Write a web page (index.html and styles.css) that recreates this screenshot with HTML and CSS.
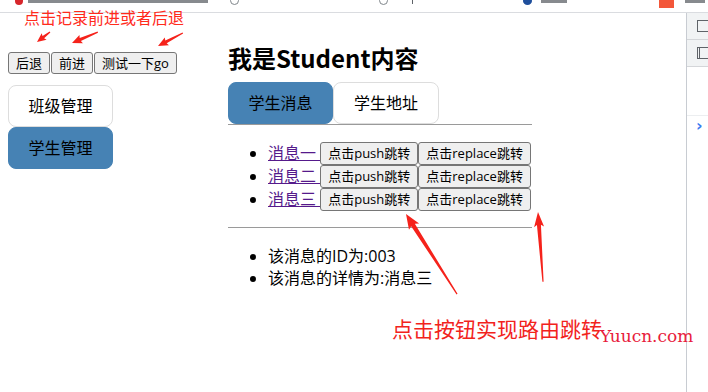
FILE: index.html
```html
<!DOCTYPE html>
<html lang="zh-CN">
<head>
<meta charset="utf-8">
<title>Student</title>
<link rel="stylesheet" href="styles.css">
</head>
<body>
<div class="chrome">
  <span class="c-red"></span>
  <span class="c-text c-t1"></span>
  <span class="c-ring c-r1"></span>
  <span class="c-ring c-r2"></span>
  <span class="c-bar"></span>
  <span class="c-blue"></span>
  <span class="c-text c-t2"></span>
  <span class="c-orange"></span>
  <span class="c-text c-t3"></span>
</div>
<div class="frame">
  <main class="page">
    <div class="row">
      <div class="side">
        <div class="hist"><button class="btn">后退</button><button class="btn">前进</button><button class="btn">测试一下go</button></div>
        <nav class="menu">
          <a class="menu-item">班级管理</a>
          <a class="menu-item active">学生管理</a>
        </nav>
      </div>
      <section class="content">
        <h2 class="title">我是Student内容</h2>
        <div class="tabs">
          <a class="tab active">学生消息</a>
          <a class="tab">学生地址</a>
        </div>
        <ul class="msgs">
          <li><a class="msg-link" href="#">消息一&nbsp;</a><button class="btn btn-row">点击push跳转</button><button class="btn btn-row">点击replace跳转</button></li>
          <li><a class="msg-link" href="#">消息二&nbsp;</a><button class="btn btn-row">点击push跳转</button><button class="btn btn-row">点击replace跳转</button></li>
          <li><a class="msg-link" href="#">消息三&nbsp;</a><button class="btn btn-row">点击push跳转</button><button class="btn btn-row">点击replace跳转</button></li>
        </ul>
        <hr class="rule">
        <ul class="detail">
          <li>该消息的ID为:003</li>
          <li>该消息的详情为:消息三</li>
        </ul>
      </section>
    </div>
  </main>
  <aside class="devtools">
    <div class="dt-row"><span class="dt-ico dt-ico1"></span></div>
    <div class="dt-row"><span class="dt-ico dt-ico2"></span></div>
    <div class="dt-empty"></div>
    <div class="dt-prompt">›</div>
  </aside>
</div>

<div class="notes">
  <div class="note note-top">点击记录前进或者后退</div>
  <div class="note note-big">点击按钮实现路由跳转</div>
  <div class="note wm">Yuucn.com</div>
  <svg class="arrows" width="708" height="392" viewBox="0 0 708 392">
    <g fill="#f5221b">
      <polygon transform="translate(37 42) rotate(-37.6)" points="0,0 9,-4 8,-1.3 16.4,-0.6 16.4,0.6 8,1.3 9,4"/>
      <polygon transform="translate(72 43) rotate(-22.9)" points="0,0 10,-4.5 9,-1.5 28,-0.6 28,0.6 9,1.5 10,4.5"/>
      <polygon transform="translate(158 46) rotate(-27.5)" points="0,0 10,-4.5 9,-1.5 28,-0.6 28,0.6 9,1.5 10,4.5"/>
      <polygon transform="translate(406 214) rotate(57.5)" points="0,0 15,-6 13,-2.2 95,-0.6 95,0.6 13,2.2 15,6"/>
      <polygon transform="translate(538 212) rotate(85.9)" points="0,0 15,-5 13,-2 70,-0.6 70,0.6 13,2 15,5"/>
    </g>
  </svg>
</div>
</body>
</html>
```

FILE: styles.css
```css
* { box-sizing: border-box; }
html, body { margin: 0; padding: 0; }
body {
  width: 708px;
  height: 392px;
  overflow: hidden;
  background: #fff;
  color: #000;
  font-family: "Open Sans", "Noto Sans CJK SC", sans-serif;
  position: relative;
}

/* browser chrome remnant */
.chrome {
  height: 13px;
  border-bottom: 1px solid #dadce0;
  position: relative;
  display: flex;
  align-items: flex-start;
  overflow: hidden;
}
.chrome span { display: block; flex: none; }
.c-red { width: 8px; height: 8px; margin-top: -3px; margin-left: 15px; border-radius: 50%; background: #d7262b; }
.c-text { height: 3px; background: #5f6368; opacity: .75; }
.c-t1 { width: 180px; margin-left: 5px; }
.c-ring { width: 9px; height: 9px; margin-top: -4px; border: 1.5px solid #80868b; border-radius: 50%; }
.c-r1 { margin-left: 22px; }
.c-r2 { margin-left: 140px; }
.c-bar { width: 1px; height: 4px; background: #5f6368; margin-left: 24px; }
.c-blue { width: 9px; height: 8px; margin-top: -3px; margin-left: 110px; border-radius: 50%; background: #1f4f9c; }
.c-t2 { width: 26px; margin-left: 9px; }
.c-orange { width: 15px; height: 8px; margin-left: 92px; background: #f3573a; }
.c-t3 { width: 20px; margin-left: 11px; }

.frame { display: flex; height: 379px; }
.page { flex: 1; padding: 29px 0 0 8px; }
.row { display: flex; align-items: flex-start; }

/* left column */
.side { width: 220px; flex: none; padding-top: 10px; }
.hist { display: flex; gap: 1px; }
.btn {
  font-family: "Open Sans", "Noto Sans CJK SC", sans-serif;
  font-size: 13px;
  line-height: 20px;
  height: 22px;
  padding: 0 7px;
  margin: 0;
  background: #efefef;
  color: #000;
  border: 1px solid #767676;
  border-radius: 3px;
}
.menu { margin-top: 11px; width: 105px; display: flex; flex-direction: column; }
.menu-item {
  display: block;
  height: 42px;
  line-height: 40px;
  text-align: center;
  font-size: 16px;
  color: #000;
  background: #fff;
  border: 1px solid #ddd;
  border-radius: 8px;
}
.menu-item.active { background: #4682b4; border-color: #4682b4; }

/* right column */
.content { width: 304px; flex: none; }
.title { margin: 0; font-family: "Noto Sans CJK SC", sans-serif; font-size: 24px; line-height: 32px; font-weight: 700; }
.tabs { margin-top: 8px; display: flex; border-bottom: 1px solid #9a9a9a; }
.tab {
  display: block;
  width: 106px;
  height: 42px;
  line-height: 40px;
  text-align: center;
  font-size: 16px;
  color: #000;
  background: #fff;
  border: 1px solid #ddd;
  border-radius: 8px;
}
.tab.active { width: 105px; background: #4682b4; border-color: #4682b4; }

.msgs { margin: 17px 0 0; padding-left: 40px; font-size: 16px; }
.msgs li { line-height: 23px; height: 23px; }
.msg-link { color: #551a8b; text-decoration: underline; vertical-align: top; }
.btn-row { height: 23px; line-height: 21px; padding: 0 7px; vertical-align: top; }

.rule { margin: 16px 0 0; border: 0; border-top: 1px solid #9a9a9a; height: 0; }
.detail { margin: 17px 0 0; padding-left: 40px; font-size: 16px; line-height: 22px; }

/* devtools pane */
.devtools { width: 22px; flex: none; border-left: 1px solid #c8ccd2; background: #fff; }
.dt-row { height: 27px; background: #f1f3f4; border-bottom: 1px solid #d4d6d9; padding: 7px 0 0 10px; }
.dt-ico { display: block; width: 12px; height: 12px; border: 1px solid #5f6368; border-right: 0; }
.dt-ico2 { border-left: 3px double #5f6368; }
.dt-empty { height: 49px; border-bottom: 1px solid #eceef0; }
.dt-prompt { color: #3a7bf0; font-size: 16px; line-height: 20px; padding-left: 9px; font-weight: 700; font-family: "DejaVu Sans", sans-serif; }

/* annotations overlay */
.notes { position: absolute; inset: 0; pointer-events: none; }
.note { position: absolute; white-space: nowrap; font-family: "Noto Sans CJK SC", sans-serif; }
.note-top { left: 24px; top: 8px; font-size: 16px; line-height: 18px; color: #ff2b1c; }
.note-big { left: 392px; top: 316px; font-size: 21px; line-height: 24px; color: #f2231c; }
.wm { left: 600px; top: 326px; font-family: "DejaVu Serif", serif; font-size: 17px; line-height: 20px; color: #e81c3c; }
.arrows { position: absolute; left: 0; top: 0; }
```
